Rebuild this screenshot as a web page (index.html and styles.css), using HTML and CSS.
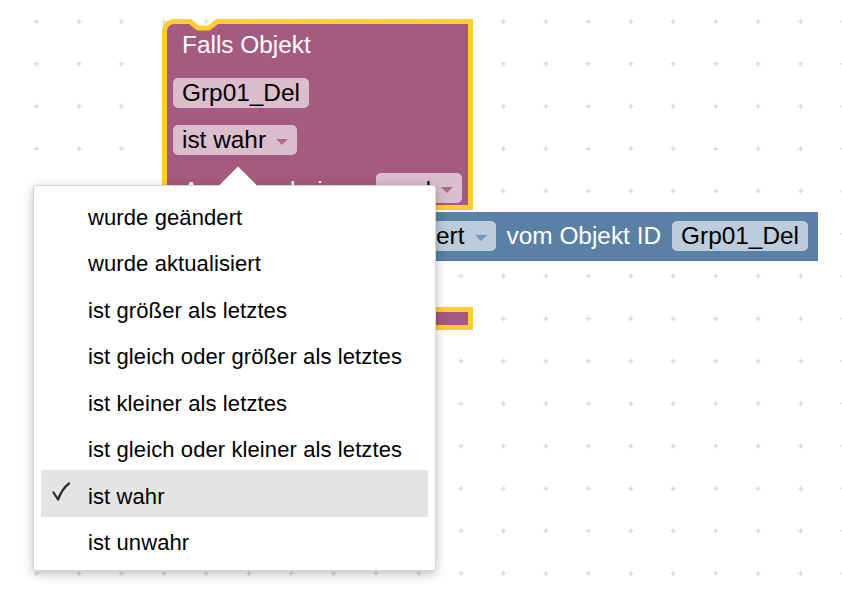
FILE: index.html
```html
<!DOCTYPE html>
<html lang="de">
<head>
<meta charset="utf-8">
<title>Blockly</title>
<link rel="stylesheet" href="styles.css">
</head>
<body>
<div class="workspace">
  <svg class="grid" width="842" height="604">
    <defs>
      <pattern id="dots" patternUnits="userSpaceOnUse" width="42.45" height="42.45" x="15" y="0">
        <rect x="19" y="21" width="5" height="1" fill="#cbcbcb"/>
        <rect x="21" y="19" width="1" height="5" fill="#cbcbcb"/>
      </pattern>
    </defs>
    <rect width="842" height="604" fill="url(#dots)"/>
  </svg>

  <div class="block purple-top">
    <svg class="shape" width="311" height="191" viewBox="0 0 311 191">
      <path d="M2.5 188.5 V12 A9.5 9.5 0 0 1 12 2.5 H28 L36 9 H47 L55 2.5 H308.5 V188.5 Z" fill="#a55b80" stroke="#fc3" stroke-width="5"/>
    </svg>
    <div class="rows">
      <div class="title">Falls Objekt</div>
      <div class="row"><span class="pill pink">Grp01_Del</span></div>
      <div class="row"><span class="pill pink dd">ist wahr<i class="arrow arrow-pink"></i></span></div>
      <div class="row between low"><span class="label"><span class="txt">Auslösen bei</span></span><span class="pill pink dd wide"><span class="txt">und</span><i class="arrow arrow-pink"></i></span></div>
    </div>
  </div>

  <div class="block blue">
    <span class="pill light-blue dd">Wert wurde geändert<i class="arrow arrow-blue"></i></span>
    <span class="label">vom Objekt ID</span>
    <span class="pill light-blue">Grp01_Del</span>
  </div>

  <div class="block purple-bottom"></div>

  <div class="menu">
    <div class="item">wurde geändert</div>
    <div class="item">wurde aktualisiert</div>
    <div class="item">ist größer als letztes</div>
    <div class="item">ist gleich oder größer als letztes</div>
    <div class="item">ist kleiner als letztes</div>
    <div class="item">ist gleich oder kleiner als letztes</div>
    <div class="item selected">
      <svg class="check" width="20" height="20" viewBox="0 0 20 20">
        <path d="M1.5 10.5 L6 17.5 C8.5 11 11.5 5.5 17 1.5" fill="none" stroke="#2a2a2a" stroke-width="2.2" stroke-linecap="round" stroke-linejoin="round"/>
      </svg>ist wahr</div>
    <div class="item">ist unwahr</div>
  </div>
</div>
</body>
</html>
```
FILE: styles.css
```css
html, body {
  margin: 0;
  padding: 0;
  background: #fff;
}

.workspace {
  position: relative;
  width: 842px;
  height: 604px;
  overflow: hidden;
  background: #fff;
  font-family: "Liberation Sans", Arial, sans-serif;
}

.grid {
  position: absolute;
  left: 0;
  top: 0;
}

.block {
  position: absolute;
  box-sizing: border-box;
}

.purple-top {
  left: 162px;
  top: 19px;
  width: 311px;
  height: 191px;
}

.shape {
  position: absolute;
  left: 0;
  top: 0;
}

.rows {
  position: relative;
  display: flex;
  flex-direction: column;
  gap: 17.7px;
  padding: 11px 11px 0 11px;
}

.title {
  color: #fff;
  font-size: 24.4px;
  line-height: 30px;
  padding-left: 9px;
}

.row {
  display: flex;
}

.row.between {
  justify-content: space-between;
  align-items: center;
}

.label {
  color: #fff;
  font-size: 24.4px;
  line-height: 30px;
  white-space: nowrap;
}

.row.between .label {
  padding-left: 10px;
}

.low .txt {
  position: relative;
  top: 3px;
}

.pill {
  display: inline-flex;
  align-items: center;
  flex-shrink: 0;
  box-sizing: border-box;
  height: 30px;
  line-height: 30px;
  padding: 0 9px 0 9px;
  border-radius: 5px;
  font-size: 24.4px;
  color: #000;
  white-space: nowrap;
}

.pill.wide {
  width: 86px;
  justify-content: flex-end;
}

.pink {
  background: #dbbdcc;
}

.light-blue {
  background: #bdccdb;
}

.arrow {
  display: block;
  width: 0;
  height: 0;
  border-left: 6.5px solid transparent;
  border-right: 6.5px solid transparent;
  border-top: 6px solid #ab6b8c;
  margin-left: 10px;
  margin-top: 3px;
}

.arrow-blue {
  border-top-color: #7096bd;
}

.blue {
  left: 300px;
  top: 212px;
  width: 518px;
  height: 49px;
  background: #5b80a5;
  border-bottom: 1px solid #4f7193;
  display: flex;
  align-items: center;
  justify-content: flex-end;
  gap: 11px;
  padding-right: 10px;
  overflow: hidden;
}

.purple-bottom {
  left: 162px;
  top: 307px;
  width: 311px;
  height: 23px;
  background: #a55b80;
  border: 5px solid #fc3;
}

.menu {
  position: absolute;
  left: 33px;
  top: 185px;
  width: 403px;
  height: 386px;
  box-sizing: border-box;
  background: #fff;
  border: 1px solid #d4d4d4;
  border-radius: 3px;
  box-shadow: 0 3px 11px rgba(0, 0, 0, 0.26);
  padding: 5px 7px;
}

.menu::before {
  content: "";
  position: absolute;
  left: 191px;
  top: -14px;
  width: 26px;
  height: 26px;
  background: #fff;
  transform: rotate(45deg);
}

.item {
  position: relative;
  height: 46.5px;
  box-sizing: border-box;
  padding: 5.5px 0 0 47px;
  line-height: 41px;
  font-size: 22px;
  letter-spacing: 0.1px;
  color: #000;
  white-space: nowrap;
}

.item.selected {
  background: #e4e4e4;
}

.check {
  position: absolute;
  left: 11px;
  top: 12px;
}
```
